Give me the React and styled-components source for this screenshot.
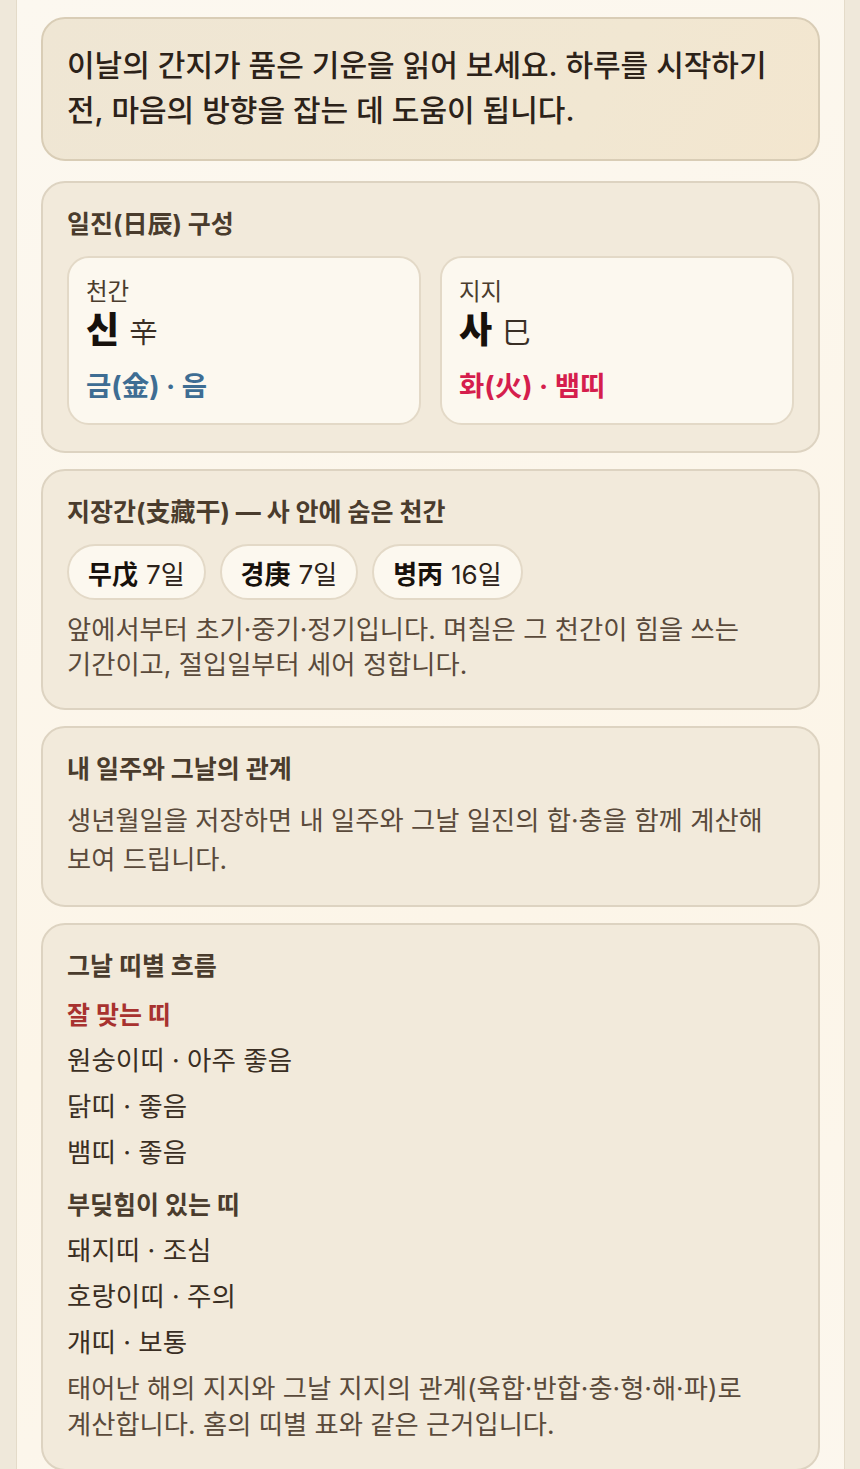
import React from "react";
import styled, { createGlobalStyle } from "styled-components";

const GlobalStyle = createGlobalStyle`
  html, body {
    margin: 0;
    padding: 0;
    background: #efe8da;
  }
  body {
    font-family: "Inter", "Noto Sans CJK KR", sans-serif;
    -webkit-font-smoothing: antialiased;
    word-break: keep-all;
  }
`;

const Page = styled.div`
  width: 829px;
  margin: 0 auto 0 16px;
  min-height: 1469px;
  box-sizing: border-box;
  padding: 17px 24px 40px;
  background: linear-gradient(160deg, #fcf8f0 0%, #fcf5e8 60%, #fcf7ee 100%);
  border-left: 1px solid #e4dbc9;
  border-right: 1px solid #e4dbc9;
  display: flex;
  flex-direction: column;
  gap: 16px;
`;

const Card = styled.section`
  background: ${(p) =>
    p.$intro
      ? "linear-gradient(120deg, #efe6d4 0%, #f1e7d2 70%, #f3e6cf 100%)"
      : "#f2eadb"};
  border: 2px solid ${(p) => (p.$intro ? "#d9cdb6" : "#ddd3c1")};
  border-radius: 24px;
  padding: ${(p) => (p.$intro ? "24px 24px 26px" : "24px 24px 26px")};
  margin-bottom: ${(p) => (p.$intro ? 4 : 0)}px;
  display: flex;
  flex-direction: column;
`;

const Intro = styled.p`
  margin: 0;
  font-size: 30px;
  line-height: 45px;
  font-weight: 500;
  color: #2c2219;
`;

const Title = styled.h3`
  margin: 0 0 15px;
  font-size: 25px;
  line-height: 34px;
  font-weight: 700;
  color: #4a3c2d;
`;

const PillarGrid = styled.div`
  display: grid;
  grid-template-columns: 1fr 1fr;
  gap: 19px;
`;

const Pillar = styled.div`
  background: #fcf8ef;
  border: 2px solid #e3d9c7;
  border-radius: 22px;
  padding: 17px 17px 19px;
  display: flex;
  flex-direction: column;
`;

const PillarLabel = styled.div`
  font-size: 23.5px;
  line-height: 33px;
  color: #4a3c2d;
`;

const PillarName = styled.div`
  display: flex;
  align-items: baseline;
  gap: 10px;
  line-height: 44px;
`;

const Hangul = styled.span`
  font-size: 36px;
  font-weight: 800;
  color: #17110c;
`;

const Hanja = styled.span`
  font-size: 28.5px;
  font-weight: 400;
  color: #3a2f25;
`;

const Element = styled.div`
  margin-top: 13px;
  font-size: 27.5px;
  line-height: 36px;
  font-weight: 700;
  color: ${(p) => p.$color};
`;

const ChipRow = styled.div`
  display: flex;
  gap: 14px;
  margin: 0 0 12px;
`;

const Chip = styled.div`
  height: 56px;
  box-sizing: border-box;
  padding: 0 19px;
  display: flex;
  align-items: center;
  gap: 8px;
  background: #fcf8ef;
  border: 2px solid #e3d9c7;
  border-radius: 999px;
  font-size: 26px;
  color: #2c2219;
`;

const ChipStem = styled.b`
  font-weight: 700;
  color: #17110c;
`;

const Body = styled.p`
  margin: 0;
  font-size: 26.3px;
  line-height: ${(p) => p.$lh || 35}px;
  color: #5a4a3b;
`;

const GroupLabel = styled.div`
  font-size: 25px;
  line-height: 34px;
  font-weight: 700;
  color: ${(p) => p.$color || "#4a3c2d"};
  margin-top: ${(p) => (p.$first ? 0 : 7)}px;
`;

const FlowList = styled.ul`
  list-style: none;
  margin: 0;
  padding: 0;
  display: flex;
  flex-direction: column;
  gap: 10px;
  margin-top: 10px;
  margin-bottom: 11px;
`;

const FlowItem = styled.li`
  font-size: 26.5px;
  line-height: 36px;
  color: #3a2e23;
`;

const pillars = [
  { label: "천간", name: "신", hanja: "辛", element: "금(金) · 음", color: "#3e6d93" },
  { label: "지지", name: "사", hanja: "巳", element: "화(火) · 뱀띠", color: "#d51e4d" },
];

const hidden = [
  { stem: "무戊", days: "7일" },
  { stem: "경庚", days: "7일" },
  { stem: "병丙", days: "16일" },
];

const good = ["원숭이띠 · 아주 좋음", "닭띠 · 좋음", "뱀띠 · 좋음"];
const clash = ["돼지띠 · 조심", "호랑이띠 · 주의", "개띠 · 보통"];

export default function App() {
  return (
    <>
      <GlobalStyle />
      <Page>
        <Card $intro>
          <Intro>
            이날의 간지가 품은 기운을 읽어 보세요. 하루를 시작하기 전, 마음의 방향을 잡는 데 도움이 됩니다.
          </Intro>
        </Card>

        <Card>
          <Title>일진(日辰) 구성</Title>
          <PillarGrid>
            {pillars.map((p) => (
              <Pillar key={p.label}>
                <PillarLabel>{p.label}</PillarLabel>
                <PillarName>
                  <Hangul>{p.name}</Hangul>
                  <Hanja>{p.hanja}</Hanja>
                </PillarName>
                <Element $color={p.color}>{p.element}</Element>
              </Pillar>
            ))}
          </PillarGrid>
        </Card>

        <Card>
          <Title>지장간(支藏干) — 사 안에 숨은 천간</Title>
          <ChipRow>
            {hidden.map((h) => (
              <Chip key={h.stem}>
                <ChipStem>{h.stem}</ChipStem>
                <span>{h.days}</span>
              </Chip>
            ))}
          </ChipRow>
          <Body>
            앞에서부터 초기·중기·정기입니다. 며칠은 그 천간이 힘을 쓰는 기간이고, 절입일부터 세어 정합니다.
          </Body>
        </Card>

        <Card>
          <Title>내 일주와 그날의 관계</Title>
          <Body $lh={39}>
            생년월일을 저장하면 내 일주와 그날 일진의 합·충을 함께 계산해 보여 드립니다.
          </Body>
        </Card>

        <Card>
          <Title>그날 띠별 흐름</Title>
          <GroupLabel $first $color="#a8322f">잘 맞는 띠</GroupLabel>
          <FlowList>
            {good.map((g) => (
              <FlowItem key={g}>{g}</FlowItem>
            ))}
          </FlowList>
          <GroupLabel>부딪힘이 있는 띠</GroupLabel>
          <FlowList>
            {clash.map((c) => (
              <FlowItem key={c}>{c}</FlowItem>
            ))}
          </FlowList>
          <Body $lh={36}>
            태어난 해의 지지와 그날 지지의 관계(육합·반합·충·형·해·파)로 계산합니다. 홈의 띠별 표와 같은 근거입니다.
          </Body>
        </Card>
      </Page>
    </>
  );
}
